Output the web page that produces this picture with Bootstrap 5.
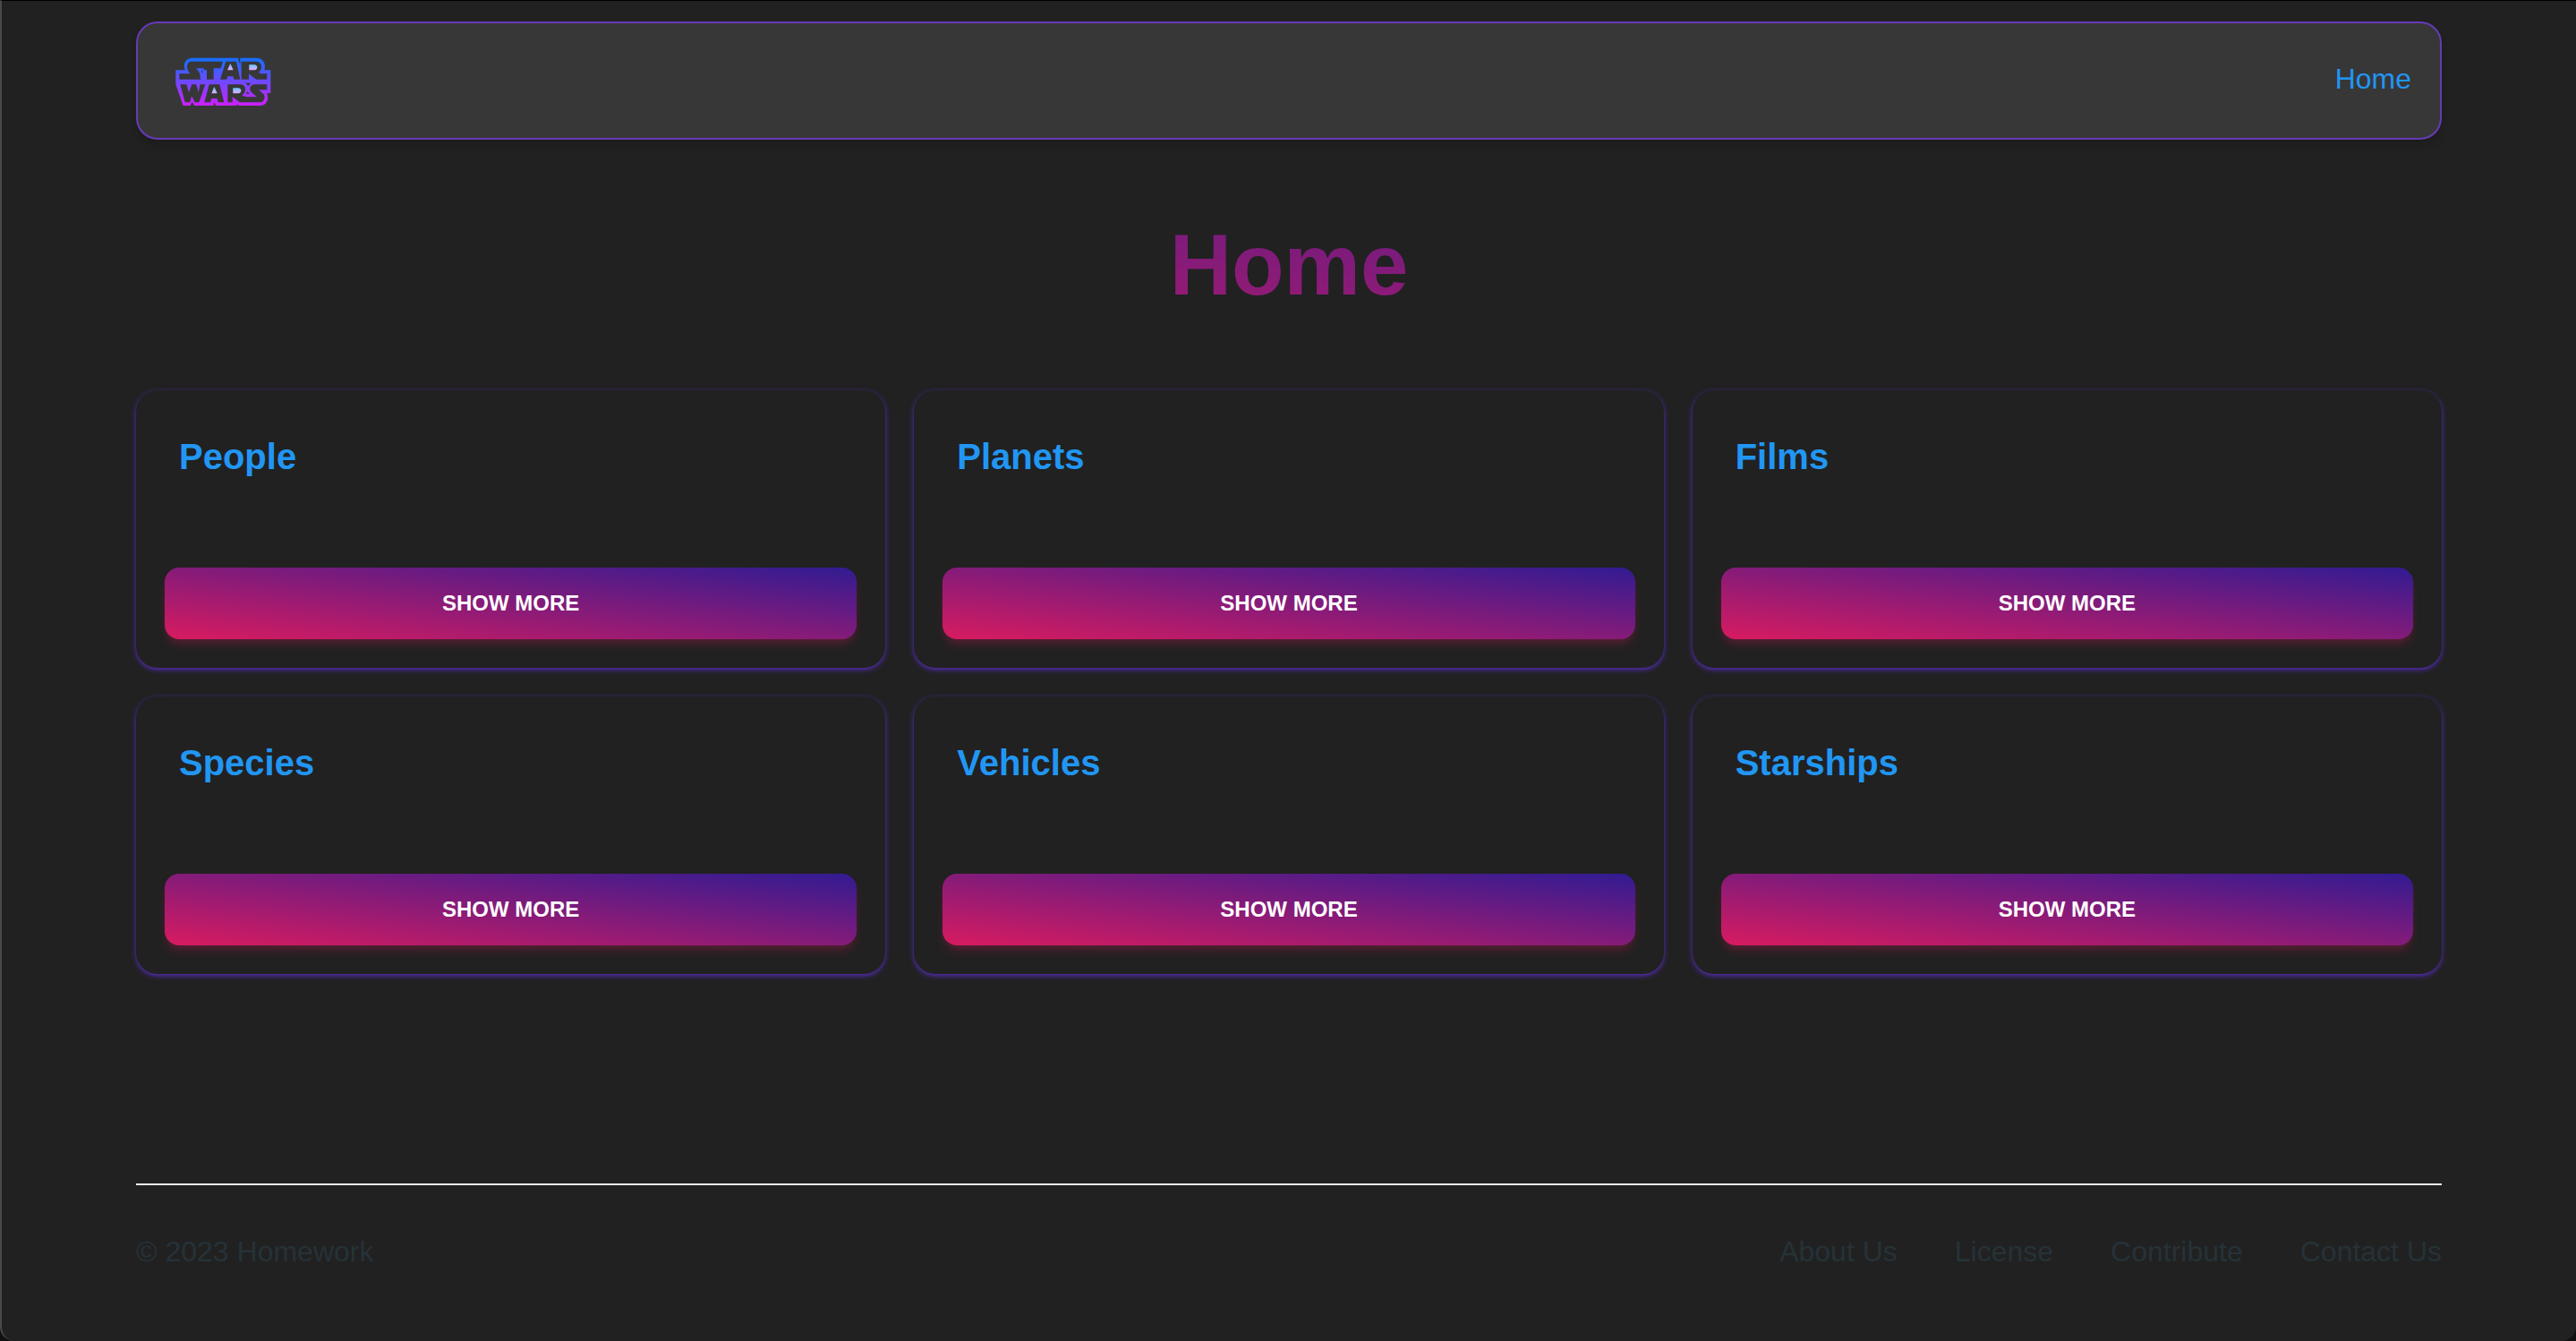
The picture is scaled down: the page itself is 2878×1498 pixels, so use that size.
<!DOCTYPE html>
<html lang="en">
<head>
<meta charset="utf-8">
<meta name="viewport" content="width=device-width, initial-scale=1">
<title>Home</title>
<link rel="stylesheet" href="https://cdn.jsdelivr.net/npm/bootstrap@5.3.0/dist/css/bootstrap.min.css">
<style>
  :root { --pink: #d81b60; --indigo: #311b92; --violet: #673ab7; --sky: #2196f3; }
  html { background: #111; }
  body { background: #212121; font-family: "Liberation Sans", Arial, sans-serif; font-size: 32px; line-height: 48px;
    min-height: 100vh; border-left: 2px solid #4a4a4a; border-top: 1px solid #000; border-radius: 0 0 16px 16px; }
  .page-wrap { width: 100%; max-width: 2640px; margin: 0 auto; padding: 23px 32px 0; }
  .top-bar { background: #373737; border: 2px solid var(--violet); border-radius: 24px; padding: 0 32px 0 40px; min-height: 132px;
    box-shadow: 0 8px 12px -2px rgba(0,0,0,.1), 0 4px 8px -4px rgba(0,0,0,.1); }
  .top-bar .nav-link { color: var(--sky); padding-bottom: 4px; }
  .hero-title { font-size: 96px; line-height: 120px; font-weight: 700; padding: 80px 0; color: transparent;
    background: linear-gradient(to top right, var(--pink), var(--indigo)); -webkit-background-clip: text; background-clip: text; }
  .tile { background: #212121; border: 0; border-radius: 24px; padding: 48px 32px 32px;
    box-shadow: 0 2px 6px #512da8, 0 2px 4px -2px #512da8; }
  .tile h2 { color: var(--sky); font-size: 40px; line-height: 52px; font-weight: 700; padding: 0 16px; margin-bottom: 98px; }
  .tile .btn { border: 0; border-radius: 16px; color: #fff; font-size: 24px; line-height: 32px; font-weight: 700; padding: 24px;
    background: linear-gradient(to top right, var(--pink), var(--indigo));
    box-shadow: 0 8px 12px -2px rgba(233,30,99,.2), 0 4px 8px -4px rgba(233,30,99,.2); }
  .tile-grid { --bs-gutter-x: 32px; --bs-gutter-y: 32px; }
  .page-foot { margin-top: 234px; padding: 50px 0; border-top: 2px solid #eceff1; color: #263238; }
  .page-foot .nav { gap: 64px; }
  .page-foot a { color: #263238; }
</style>
<script src="https://cdn.jsdelivr.net/npm/bootstrap@5.3.0/dist/js/bootstrap.bundle.min.js"></script>
</head>
<body>
<div class="page-wrap">
  <nav class="top-bar d-flex align-items-center justify-content-between">
    <a class="d-flex" href="#" aria-label="Star Wars">
      <svg width="110" height="58" viewBox="161 152 330 174">
        <defs>
          <linearGradient id="frame" x1="0" y1="170" x2="0" y2="318" gradientUnits="userSpaceOnUse"><stop stop-color="#1a6dff"/><stop offset="1" stop-color="#c822ff"/></linearGradient>
          <linearGradient id="glow" x1="0" y1="0" x2="0" y2="1"><stop stop-color="#6dc7ff"/><stop offset="1" stop-color="#e6abff"/></linearGradient>
        </defs>
        <!-- badge silhouette -->
        <path fill="url(#frame)" d="M168 204H200C190 182 204 163 222 163H377L384 188V163H440C462 164 471 184 465 204H486V281H474C482 302 472 323 450 323H380L375 319L370 323H302L298 311L294 323H230L223 310L217 323H193L168 252Z"/>
        <!-- upper emblem row -->
        <g fill="#373737">
          <path d="M222 175H326L319 198H295V235H272V203H258L254 235H180V216H216C210 206 205 200 206 190C208 179 213 175 222 175Z"/>
          <path d="M336 175H371L384 235H364L360 225H342L339 235H317Z"/>
          <path d="M388 175H440C460 178 459 203 445 212L454 216H474V235H438L413 216V235H388Z"/>
        </g>
        <path fill="url(#frame)" d="M236 198H262V232L256 237L250 233C252 217 246 208 236 198Z"/>
        <path fill="#373737" d="M254 204L259 209L255 214Z"/>
        <!-- lower emblem row -->
        <g fill="#373737">
          <path d="M183 252H204L212 279L222 252H237L244 279L250 252H267L246 312H232L222 291L215 312H199Z"/>
          <path d="M280 252H315L330 312H310L307 299H288L284 312H264Z"/>
          <path d="M342 252H385C407 254 405 280 390 289L405 294H440C432 286 420 280 417 270C415 257 425 252 435 252H474V270H446L457 280C471 286 468 312 450 312H382L358 293V312H342Z"/>
          <path d="M402 247H420L411 257Z"/>
          <path d="M408 276L416 283H403Z"/>
        </g>
        <g fill="url(#glow)">
          <path d="M351 182L361 204H341Z"/>
          <path d="M414 186H432C444 187 444 203 432 204H414Z"/>
          <path d="M297 260L307 282H288Z"/>
          <path d="M360 264H378C390 265 390 281 378 282H360Z"/>
        </g>
      </svg>
    </a>
    <a class="nav-link" href="#">Home</a>
  </nav>
  <main>
    <h1 class="hero-title text-center mb-0">Home</h1>
    <div class="row row-cols-1 row-cols-md-3 tile-grid">
      <div class="col"><section class="card tile"><h2>People</h2><button class="btn w-100" type="button">SHOW MORE</button></section></div>
      <div class="col"><section class="card tile"><h2>Planets</h2><button class="btn w-100" type="button">SHOW MORE</button></section></div>
      <div class="col"><section class="card tile"><h2>Films</h2><button class="btn w-100" type="button">SHOW MORE</button></section></div>
      <div class="col"><section class="card tile"><h2>Species</h2><button class="btn w-100" type="button">SHOW MORE</button></section></div>
      <div class="col"><section class="card tile"><h2>Vehicles</h2><button class="btn w-100" type="button">SHOW MORE</button></section></div>
      <div class="col"><section class="card tile"><h2>Starships</h2><button class="btn w-100" type="button">SHOW MORE</button></section></div>
    </div>
  </main>
  <footer class="page-foot d-flex flex-wrap justify-content-between">
    <span>© 2023 Homework</span>
    <nav class="nav"><a class="text-decoration-none" href="#">About Us</a><a class="text-decoration-none" href="#">License</a><a class="text-decoration-none" href="#">Contribute</a><a class="text-decoration-none" href="#">Contact Us</a></nav>
  </footer>
</div>
</body>
</html>
